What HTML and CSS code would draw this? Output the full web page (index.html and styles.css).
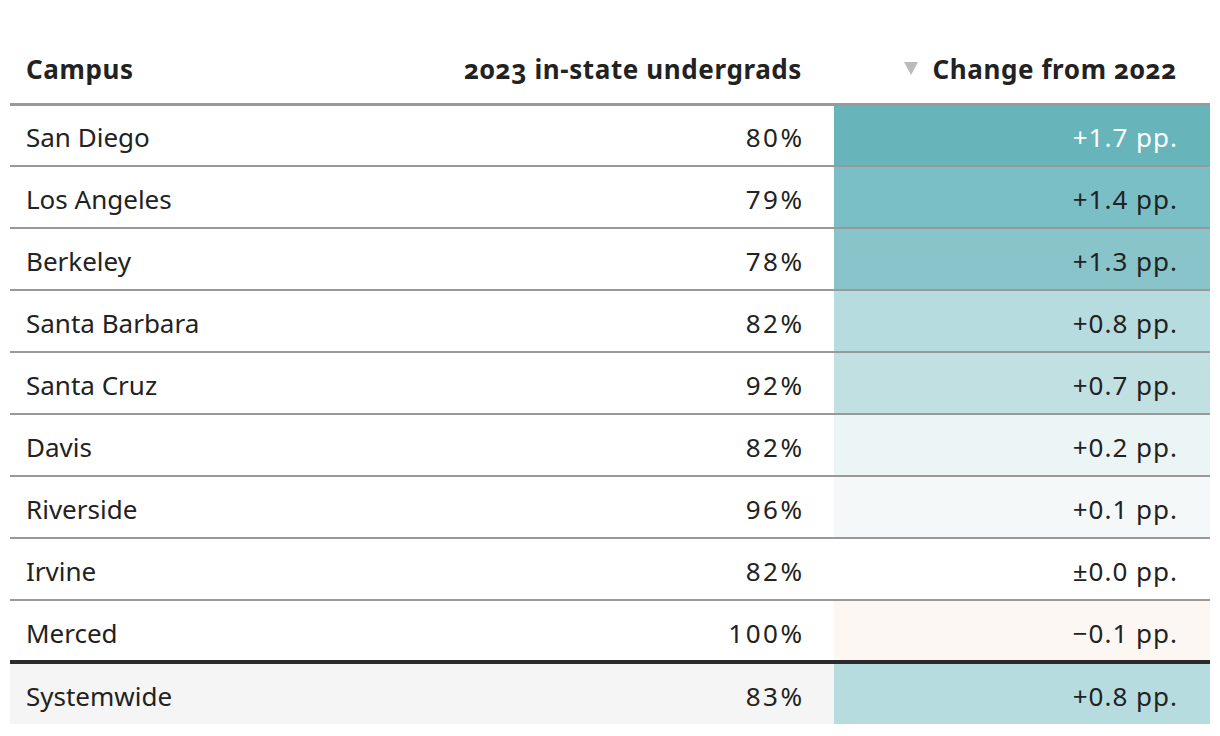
FILE: index.html
```html
<!DOCTYPE html>
<html lang="en">
<head>
<meta charset="utf-8">
<title>UC in-state undergrads</title>
<link rel="stylesheet" href="styles.css">
</head>
<body>
<table class="data">
  <colgroup>
    <col class="c-campus">
    <col class="c-share">
    <col class="c-change">
  </colgroup>
  <thead>
    <tr>
      <th class="th-left">Campus</th>
      <th class="th-right">2023 in-state undergrads</th>
      <th class="th-right"><span class="sort"></span>Change from 2022</th>
    </tr>
  </thead>
  <tbody>
    <tr><td class="name">San Diego</td><td class="num">80%</td><td class="chg s5">+1.7 pp.</td></tr>
    <tr><td class="name">Los Angeles</td><td class="num">79%</td><td class="chg s4">+1.4 pp.</td></tr>
    <tr><td class="name">Berkeley</td><td class="num">78%</td><td class="chg s3">+1.3 pp.</td></tr>
    <tr><td class="name">Santa Barbara</td><td class="num">82%</td><td class="chg s2">+0.8 pp.</td></tr>
    <tr><td class="name">Santa Cruz</td><td class="num">92%</td><td class="chg s2b">+0.7 pp.</td></tr>
    <tr><td class="name">Davis</td><td class="num">82%</td><td class="chg s1">+0.2 pp.</td></tr>
    <tr><td class="name">Riverside</td><td class="num">96%</td><td class="chg s0">+0.1 pp.</td></tr>
    <tr><td class="name">Irvine</td><td class="num">82%</td><td class="chg">&plusmn;0.0 pp.</td></tr>
    <tr class="last"><td class="name">Merced</td><td class="num">100%</td><td class="chg neg">&minus;0.1 pp.</td></tr>
  </tbody>
  <tfoot>
    <tr><td class="name">Systemwide</td><td class="num">83%</td><td class="chg s2">+0.8 pp.</td></tr>
  </tfoot>
</table>
</body>
</html>
```

FILE: styles.css
```css
html, body {
  margin: 0;
  padding: 0;
  background: #fff;
}

body {
  font-family: "Noto Sans", "Open Sans", "Liberation Sans", sans-serif;
  color: #222;
}

.data {
  margin: 0 0 0 10px;
  width: 1200px;
  border-collapse: collapse;
  table-layout: fixed;
}

.c-campus { width: 400px; }
.c-share { width: 424px; }
.c-change { width: 376px; }

thead th {
  height: 104px;
  box-sizing: border-box;
  padding: 0 0 19px 0;
  vertical-align: bottom;
  font-family: "Noto Sans", "Open Sans", sans-serif;
  font-weight: 700;
  font-size: 26px;
  line-height: 30px;
  letter-spacing: 0.6px;
  color: #222;
  font-variant-numeric: oldstyle-nums;
  border-bottom: 3px solid #999;
}

.th-left { text-align: left; padding-left: 16px; }
.th-right { text-align: right; }
thead th:nth-child(2) { padding-right: 32px; }
thead th:nth-child(3) { padding-right: 33px; }

.sort {
  display: inline-block;
  width: 0;
  height: 0;
  border-left: 7.5px solid transparent;
  border-right: 7.5px solid transparent;
  border-top: 13px solid #bbb;
  margin-right: 14px;
  vertical-align: 4px;
}

tbody td, tfoot td {
  height: 62px;
  box-sizing: border-box;
  padding: 4px 0 0 0;
  font-size: 26px;
  line-height: 30px;
  font-weight: 400;
  vertical-align: middle;
}

tbody tr { border-bottom: 2px solid #999; }
tbody tr.last { border-bottom: 4px solid #2b2b2b; }

.name { text-align: left; padding-left: 16px; }
.num {
  text-align: right;
  padding-right: 29.5px;
  letter-spacing: 2.5px;
}
.chg {
  text-align: right;
  padding-right: 32px;
  letter-spacing: 1px;
}

.s5 { background: #67b4bb; color: #fff; }
.s4 { background: #7bbfc6; }
.s3 { background: #88c4c9; }
.s2 { background: #b6dcdf; }
.s2b { background: #c1e0e2; }
.s1 { background: #ebf5f6; }
.s0 { background: #f4f8f9; }
.neg { background: #fdf7f3; }

tfoot td { background: #f5f5f5; }
tfoot td.s2 { background: #b6dcdf; }
```
